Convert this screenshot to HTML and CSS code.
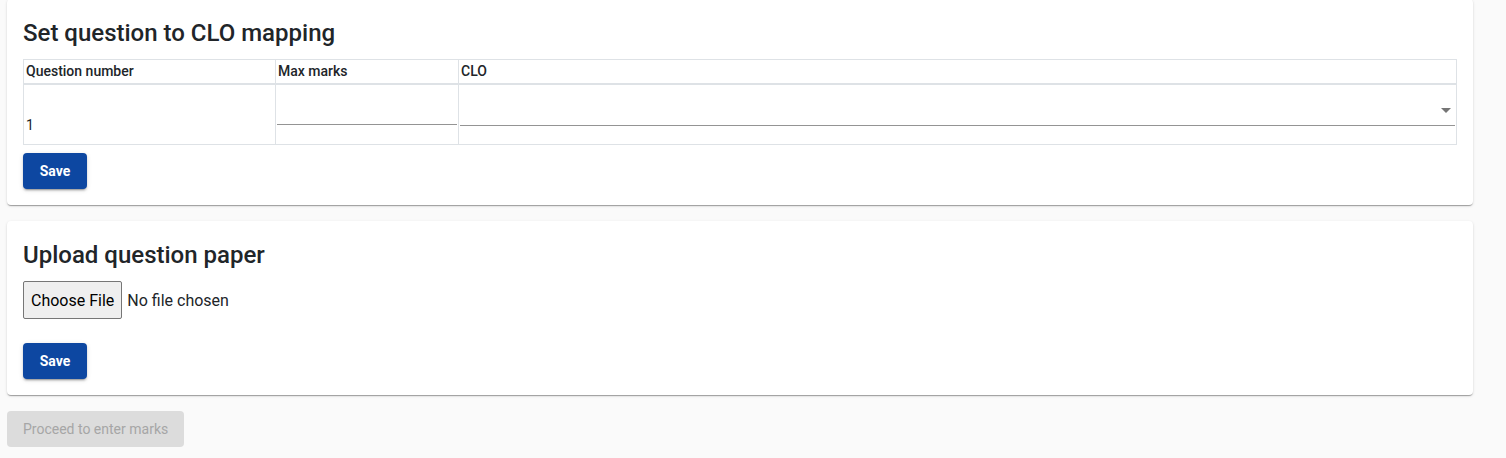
FILE: index.html
```html
<!DOCTYPE html>
<html>
<head>
<meta charset="utf-8">
<link rel="stylesheet" href="styles.css">
</head>
<body>
<div class="page">
  <section class="card">
    <h2 class="card-title">Set question to CLO mapping</h2>
    <table class="map-table">
      <colgroup>
        <col class="c1"><col class="c2"><col class="c3">
      </colgroup>
      <thead>
        <tr><th>Question number</th><th>Max marks</th><th>CLO</th></tr>
      </thead>
      <tbody>
        <tr>
          <td class="num">1</td>
          <td><div class="field"><input class="text-input" type="text"></div></td>
          <td><div class="field sel"><div class="select-box"><span class="arrow"></span></div></div></td>
        </tr>
      </tbody>
    </table>
    <button class="btn-primary">Save</button>
  </section>

  <section class="card">
    <h2 class="card-title">Upload question paper</h2>
    <div class="file-row"><input type="file" class="file-input"></div>
    <button class="btn-primary">Save</button>
  </section>

  <button class="btn-disabled" disabled>Proceed to enter marks</button>
</div>
</body>
</html>
```
FILE: styles.css
```css
html, body {
  margin: 0;
  padding: 0;
  background: #fafafa;
  font-family: Roboto, "Liberation Sans", sans-serif;
  color: #212529;
}
.page {
  margin-top: -1px;
  padding: 0 33px 0 7px;
  display: flex;
  flex-direction: column;
  align-items: flex-start;
  gap: 16px;
}
.card {
  align-self: stretch;
  background: #fff;
  border-radius: 4px;
  box-shadow: 0 2px 1px -1px rgba(0,0,0,.2), 0 1px 1px 0 rgba(0,0,0,.14), 0 1px 3px 0 rgba(0,0,0,.12);
  padding: 16px;
  display: flex;
  flex-direction: column;
  align-items: flex-start;
}
.card-title {
  margin: 0 0 8px;
  font-size: 24px;
  font-weight: 500;
  line-height: 36px;
  color: #212529;
}
.map-table {
  width: 100%;
  border-collapse: collapse;
  table-layout: fixed;
  margin-bottom: 8px;
  font-size: 14px;
}
.c1 { width: 252px; }
.c2 { width: 183px; }
.map-table th, .map-table td {
  border: 1px solid #dee2e6;
  padding: 0 0 0 2px;
  text-align: left;
}
.map-table th {
  font-size: 14px;
  font-weight: 500;
  line-height: 16px;
  padding-top: 3px;
  padding-bottom: 4px;
  border-bottom: 2px solid #dee2e6;
  vertical-align: middle;
}
.map-table td {
  vertical-align: top;
  padding: 0 1px;
}
.map-table td.num {
  padding: 32px 2px 0;
  line-height: 16px;
  color: #212529;
}
.field {
  padding: 16px 0 19px;
}
.field.sel {
  padding: 17px 0 18px;
}
.text-input {
  display: block;
  width: 100%;
  box-sizing: border-box;
  height: 24px;
  border: none;
  border-bottom: 1px solid #949494;
  outline: none;
  padding: 0;
  font: inherit;
  background: transparent;
}
.select-box {
  position: relative;
  height: 24px;
  box-sizing: border-box;
  border-bottom: 1px solid #949494;
}
.arrow {
  position: absolute;
  right: 4px;
  top: 6px;
  width: 0;
  height: 0;
  border-left: 5px solid transparent;
  border-right: 5px solid transparent;
  border-top: 5px solid #757575;
}
.btn-primary {
  width: 64px;
  height: 36px;
  border: none;
  border-radius: 4px;
  background: #0d47a1;
  color: #fff;
  font-family: Roboto, "Liberation Sans", sans-serif;
  font-weight: 700;
  font-size: 14px;
  padding: 0;
  box-shadow: 0 3px 1px -2px rgba(0,0,0,.2), 0 2px 2px 0 rgba(0,0,0,.14), 0 1px 5px 0 rgba(0,0,0,.12);
}
.file-row {
  margin-bottom: 24px;
  height: 38px;
  display: flex;
  align-items: center;
}
.file-input {
  font-family: Roboto, "Liberation Sans", sans-serif;
  font-size: 16px;
  color: #212529;
}
.file-input::file-selector-button {
  height: 38px;
  padding: 0 7px;
  margin-right: 5px;
  font-family: Roboto, "Liberation Sans", sans-serif;
  font-size: 16px;
  color: #000;
  background: #efefef;
  border: 1px solid #767676;
  border-radius: 2px;
}
.btn-disabled {
  height: 36px;
  padding: 0 16px;
  border: none;
  border-radius: 4px;
  background: #dcdcdc;
  color: #a6a6a6;
  font-family: Roboto, "Liberation Sans", sans-serif;
  font-size: 14px;
  font-weight: 400;
}
```
